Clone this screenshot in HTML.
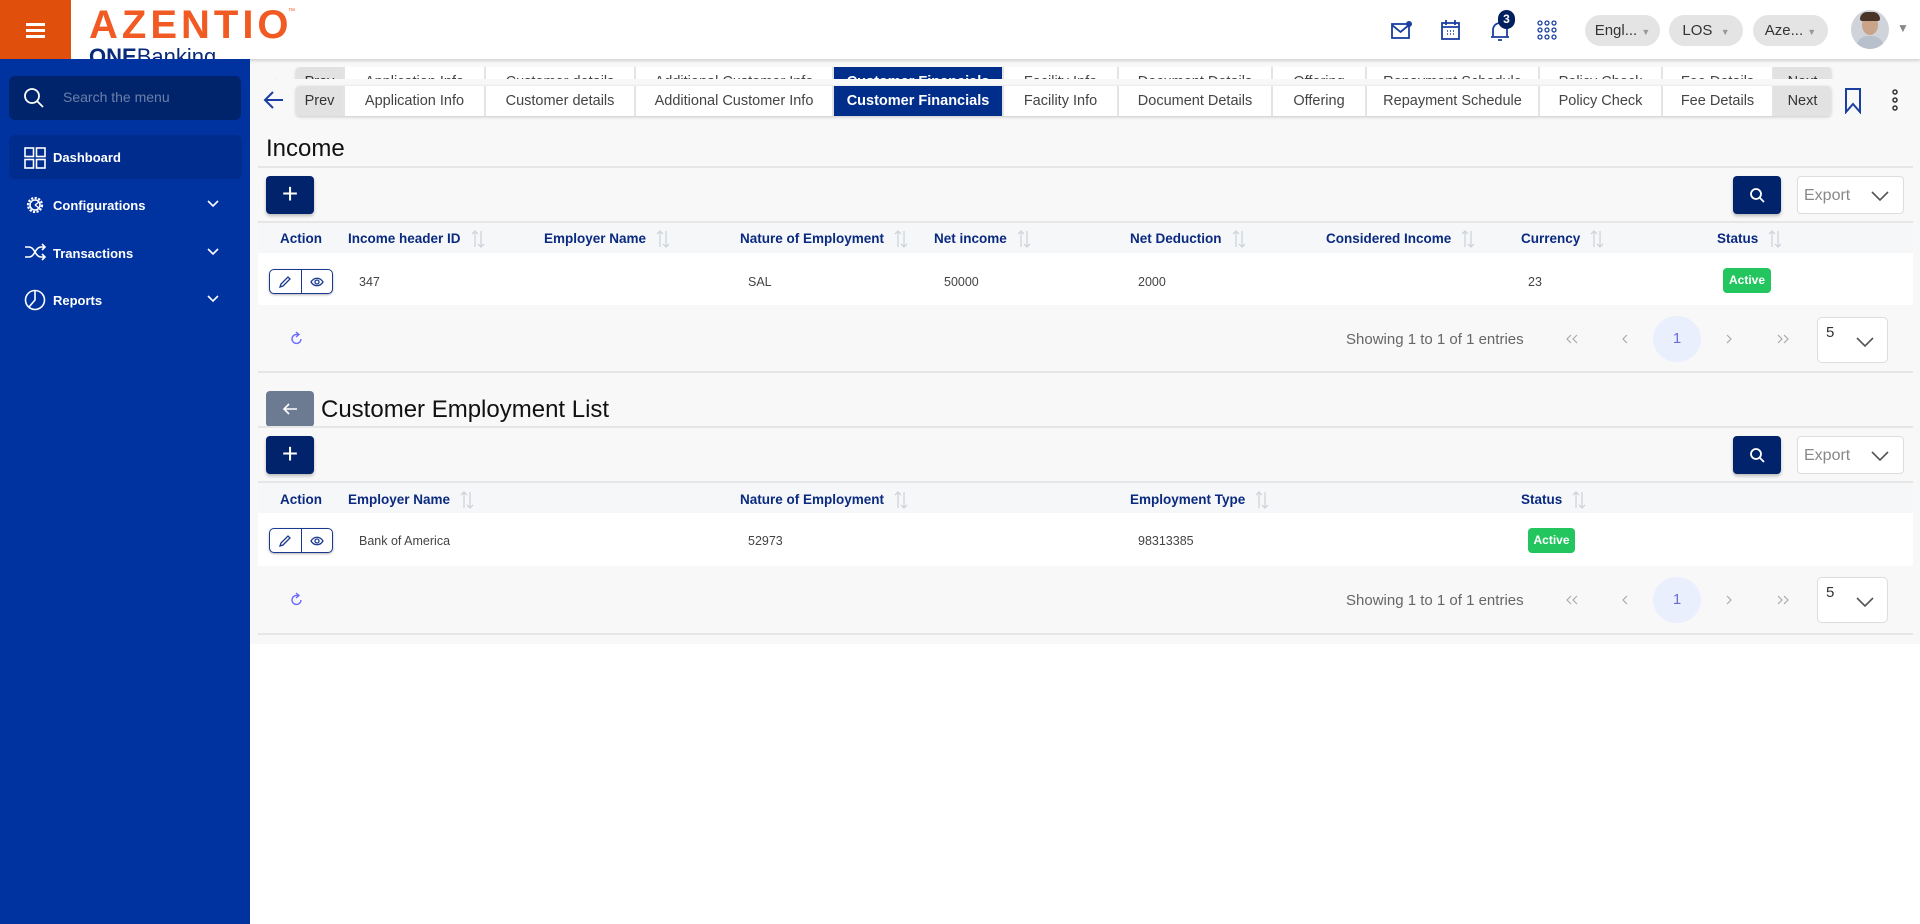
<!DOCTYPE html>
<html><head><meta charset="utf-8"><style>
*{box-sizing:border-box;margin:0;padding:0}
body{width:1920px;height:924px;overflow:hidden;background:#f8f8f8;font-family:"Liberation Sans",sans-serif;position:relative}
.a{position:absolute}
.hdr{left:0;top:0;width:1920px;height:59px;background:#fff;box-shadow:0 2px 3px rgba(0,0,0,.15);z-index:5;overflow:hidden}
.side{left:0;top:59px;width:250px;height:865px;background:#0033a0;z-index:6}
.tabs{height:30px;display:flex;border-radius:4px;overflow:hidden;box-shadow:0 1px 3px rgba(0,0,0,.2);background:#fff}
.tabs div{height:30px;line-height:30px;font-size:14.5px;color:#444;text-align:center;border-right:2px solid #e4e4e4;background:#fff;flex:none}
.tabs .g{background:#e2e2e2;color:#333}
.tabs .s{background:#002e8a;color:#fff;font-weight:bold}
.th{font-size:13.5px;font-weight:bold;color:#0a2a80;top:0;height:20px;display:flex;align-items:center}
.sort{margin-left:9px;margin-top:1px}
.td{font-size:12.5px;color:#444}
.btn{background:#00236b;border-radius:4px;color:#fff;text-align:center;box-shadow:0 2px 3px rgba(0,0,0,.25)}
.line{height:2px;background:#e6e6e6}
.act{width:64px;height:25px;border:1.5px solid #1a3a8f;border-radius:5px;display:flex;background:#fff;box-shadow:0 1px 2px rgba(0,0,0,.3)}
.act div{flex:1;display:flex;align-items:center;justify-content:center}
.act div:first-child{border-right:1.5px solid #1a3a8f}
.badge{background:#22c55e;color:#fff;font-weight:bold;font-size:12px;border-radius:4px;text-align:center;line-height:25px;height:25px}
.pg{font-size:15px;color:#666}
.pill{background:#e4e4e4;border-radius:16px;height:31px;line-height:31px;font-size:15px;color:#333;text-align:center;top:15px}
.mi{color:#fff;font-size:13px;font-weight:bold;left:53px}
.chev{left:207px}
</style></head><body>

<div class="a hdr">
  <div class="a" style="left:0;top:0;width:71px;height:59px;background:#e04f0c">
    <div class="a" style="left:26px;top:23px;width:19px;height:2.5px;background:#fff"></div>
    <div class="a" style="left:26px;top:29px;width:19px;height:2.5px;background:#fff"></div>
    <div class="a" style="left:26px;top:35px;width:19px;height:2.5px;background:#fff"></div>
  </div>
  <div class="a" style="left:89px;top:3px;font-size:40px;font-weight:bold;color:#f15a22;letter-spacing:4px">AZENTIO</div>
  <div class="a" style="left:288px;top:8px;font-size:7px;color:#f15a22">™</div>
  <div class="a" style="left:89px;top:44px;font-size:22px;color:#0a2a7a"><b>ONE</b>Banking</div>
  <svg class="a" style="left:1390px;top:20px" width="24" height="20" viewBox="0 0 24 20"><rect x="2" y="4" width="17" height="14" fill="none" stroke="#1a3fa0" stroke-width="1.8"/><path d="M2 5l8.5 7 8.5-7" fill="none" stroke="#1a3fa0" stroke-width="1.8"/><circle cx="19" cy="4" r="3" fill="#1a3fa0"/></svg>
  <svg class="a" style="left:1440px;top:19px" width="22" height="22" viewBox="0 0 22 22"><rect x="2" y="4" width="17" height="16" fill="none" stroke="#1a3fa0" stroke-width="1.8"/><path d="M2 8h17M6 1v5M15 1v5" stroke="#1a3fa0" stroke-width="1.8"/><path d="M7 12h1M10 12h1M13 12h1M7 15h1M10 15h1M13 15h1" stroke="#1a3fa0" stroke-width="1.6"/></svg>
  <svg class="a" style="left:1489px;top:18px" width="22" height="24" viewBox="0 0 22 24"><path d="M4 19V12a7 7 0 0 1 14 0v7zM2 19h18M9 22h4" fill="none" stroke="#1a3fa0" stroke-width="1.8"/></svg>
  <div class="a" style="left:1498px;top:10px;width:17px;height:19px;border-radius:9px;background:#002060;color:#fff;font-size:12px;font-weight:bold;text-align:center;line-height:19px">3</div>
  <svg class="a" style="left:1537px;top:20px" width="20" height="20" viewBox="0 0 20 20" fill="none" stroke="#1a3fa0" stroke-width="1.3"><circle cx="3" cy="3" r="2"/><circle cx="10" cy="3" r="2"/><circle cx="17" cy="3" r="2"/><circle cx="3" cy="10" r="2"/><circle cx="10" cy="10" r="2"/><circle cx="17" cy="10" r="2"/><circle cx="3" cy="17" r="2"/><circle cx="10" cy="17" r="2"/><circle cx="17" cy="17" r="2"/></svg>
  <div class="a pill" style="left:1585px;width:75px">Engl... <span style="font-size:9px;color:#999">▼</span></div>
  <div class="a pill" style="left:1669px;width:74px">LOS &nbsp;<span style="font-size:9px;color:#999">▼</span></div>
  <div class="a pill" style="left:1753px;width:75px">Aze... <span style="font-size:9px;color:#999">▼</span></div>
  <div class="a" style="left:1851px;top:10px;width:38px;height:39px;border-radius:50%;overflow:hidden;background:#d0d4da">
    <div class="a" style="left:11px;top:5px;width:16px;height:20px;border-radius:50%;background:#c9a488"></div>
    <div class="a" style="left:9px;top:2px;width:20px;height:9px;border-radius:10px 10px 3px 3px;background:#4a3428"></div>
    <div class="a" style="left:5px;top:26px;width:28px;height:16px;border-radius:12px 12px 0 0;background:#b8c0cc"></div>
  </div>
  <div class="a" style="left:1897px;top:21px;font-size:12px;color:#888">▼</div>
</div>

<div class="a side">
  <div class="a" style="left:9px;top:17px;width:232px;height:44px;background:#00246c;border-radius:6px">
    <svg class="a" style="left:14px;top:11px" width="22" height="22" viewBox="0 0 22 22" fill="none" stroke="#fff" stroke-width="1.8"><circle cx="9" cy="9" r="7"/><path d="M14 14l6 6"/></svg>
    <div class="a" style="left:54px;top:13px;font-size:14px;color:#6c7fa8">Search the menu</div>
  </div>
  <div class="a" style="left:9px;top:76px;width:233px;height:44px;background:#002c8e;border-radius:6px"></div>
  <svg class="a" style="left:24px;top:88px" width="22" height="22" viewBox="0 0 22 22" fill="none" stroke="#fff" stroke-width="1.6"><rect x="1" y="1" width="8.5" height="8.5"/><rect x="12.5" y="1" width="8.5" height="8.5"/><rect x="1" y="12.5" width="8.5" height="8.5"/><rect x="12.5" y="12.5" width="8.5" height="8.5"/></svg>
  <div class="a mi" style="top:91px">Dashboard</div>
  <svg class="a" style="left:25px;top:136px" width="20" height="20" viewBox="0 0 20 20" fill="none" stroke="#fff" stroke-width="2.2"><circle cx="10" cy="10" r="7" stroke-dasharray="2.2 1.4"/><circle cx="10" cy="10" r="5" stroke-width="1.6"/><path d="M10 10l4-3M10 10l4 3" stroke-width="1.4"/></svg>
  <div class="a mi" style="top:139px">Configurations</div>
  <svg class="a chev" style="top:141px" width="12" height="8" viewBox="0 0 12 8" fill="none" stroke="#fff" stroke-width="1.6"><path d="M1 1l5 5 5-5"/></svg>
  <svg class="a" style="left:24px;top:184px" width="22" height="18" viewBox="0 0 22 18" fill="none" stroke="#fff" stroke-width="1.6"><path d="M1 4h4c6 0 6 10 12 10h4M1 14h4c6 0 6-10 12-10h4M18 1l3 3-3 3M18 11l3 3-3 3"/></svg>
  <div class="a mi" style="top:187px">Transactions</div>
  <svg class="a chev" style="top:189px" width="12" height="8" viewBox="0 0 12 8" fill="none" stroke="#fff" stroke-width="1.6"><path d="M1 1l5 5 5-5"/></svg>
  <svg class="a" style="left:24px;top:230px" width="22" height="22" viewBox="0 0 22 22" fill="none" stroke="#fff" stroke-width="1.6"><circle cx="11" cy="11" r="9.5"/><path d="M11 1.5V11l-6 7"/></svg>
  <div class="a mi" style="top:234px">Reports</div>
  <svg class="a chev" style="top:236px" width="12" height="8" viewBox="0 0 12 8" fill="none" stroke="#fff" stroke-width="1.6"><path d="M1 1l5 5 5-5"/></svg>
</div>

<div class="a" style="left:262px;top:67px;width:1658px;height:12px;overflow:hidden">
  <div class="a" style="left:6px;top:-2px;color:#1a3fa0;font-size:22px">←</div>
  <div class="a tabs" style="left:34px;top:0">
    <div class="g" style="width:49px">Prev</div><div style="width:141px">Application Info</div><div style="width:150px">Customer details</div><div style="width:198px">Additional Customer Info</div><div class="s" style="width:170px">Customer Financials</div><div style="width:115px">Facility Info</div><div style="width:154px">Document Details</div><div style="width:94px">Offering</div><div style="width:173px">Repayment Schedule</div><div style="width:123px">Policy Check</div><div style="width:111px">Fee Details</div><div class="g" style="width:57px;border:none">Next</div>
  </div>
</div>
<div class="a" style="left:262px;top:79px;width:1658px;height:5px;background:#f8f8f8"></div>

<svg class="a" style="left:263px;top:89px" width="22" height="22" viewBox="0 0 22 22" fill="none" stroke="#1a3fa0" stroke-width="2"><path d="M20 11H3M10 3l-8 8 8 8"/></svg>
<div class="a tabs" style="left:296px;top:86px">
  <div class="g" style="width:49px">Prev</div><div style="width:141px">Application Info</div><div style="width:150px">Customer details</div><div style="width:198px">Additional Customer Info</div><div class="s" style="width:170px">Customer Financials</div><div style="width:115px">Facility Info</div><div style="width:154px">Document Details</div><div style="width:94px">Offering</div><div style="width:173px">Repayment Schedule</div><div style="width:123px">Policy Check</div><div style="width:111px">Fee Details</div><div class="g" style="width:57px;border:none">Next</div>
</div>
<svg class="a" style="left:1844px;top:88px" width="18" height="26" viewBox="0 0 18 26" fill="none" stroke="#1a3fa0" stroke-width="2"><path d="M2 1h14v23l-7-8-7 8z"/></svg>
<svg class="a" style="left:1890px;top:88px" width="10" height="26" viewBox="0 0 10 26" fill="none" stroke="#333" stroke-width="1.5"><circle cx="5" cy="4" r="2"/><circle cx="5" cy="12" r="2"/><circle cx="5" cy="20" r="2"/></svg>

<svg width="0" height="0" style="position:absolute"><defs><symbol id="so" viewBox="0 0 16 20"><path d="M5 18V2M2 5l3-3 3 3M11 2v16M8 15l3 3 3-3" fill="none" stroke="#cfd3da" stroke-width="1.3"/></symbol><symbol id="dn" viewBox="0 0 18 10"><path d="M1 1l8 8 8-8" fill="none" stroke="#555" stroke-width="1.6"/></symbol></defs></svg>

<div class="a" style="left:266px;top:135px;font-size:24px;color:#111">Income</div>
<div class="a line" style="left:258px;top:166px;width:1655px"></div>
<div class="a btn" style="left:266px;top:176px;width:48px;height:38px;font-size:28px;line-height:36px;font-weight:300">+</div>
<div class="a btn" style="left:1733px;top:176px;width:48px;height:38px"><svg style="margin-top:11px" width="16" height="16" viewBox="0 0 16 16" fill="none" stroke="#fff" stroke-width="1.8"><circle cx="7" cy="7" r="5"/><path d="M11 11l4 4"/></svg></div>
<div class="a" style="left:1797px;top:176px;width:107px;height:38px;border:1.5px solid #ddd;border-radius:4px;background:#fff;font-size:16px;color:#888;padding:10px 0 0 6px">Export<svg class="a" style="left:73px;top:14px" width="18" height="10"><use href="#dn"/></svg></div>
<div class="a line" style="left:258px;top:221px;width:1655px"></div>
<div class="a" style="left:258px;top:223px;width:1655px;height:30px;background:#f6f7f9"></div>
<div class="a" style="left:0;top:228px;width:1920px;height:20px">
  <div class="a th" style="left:280px">Action</div>
  <div class="a th" style="left:348px">Income header ID<svg class="sort" width="16" height="20"><use href="#so"/></svg></div>
  <div class="a th" style="left:544px">Employer Name<svg class="sort" width="16" height="20"><use href="#so"/></svg></div>
  <div class="a th" style="left:740px">Nature of Employment<svg class="sort" width="16" height="20"><use href="#so"/></svg></div>
  <div class="a th" style="left:934px">Net income<svg class="sort" width="16" height="20"><use href="#so"/></svg></div>
  <div class="a th" style="left:1130px">Net Deduction<svg class="sort" width="16" height="20"><use href="#so"/></svg></div>
  <div class="a th" style="left:1326px">Considered Income<svg class="sort" width="16" height="20"><use href="#so"/></svg></div>
  <div class="a th" style="left:1521px">Currency<svg class="sort" width="16" height="20"><use href="#so"/></svg></div>
  <div class="a th" style="left:1717px">Status<svg class="sort" width="16" height="20"><use href="#so"/></svg></div>
</div>
<div class="a" style="left:258px;top:253px;width:1655px;height:52px;background:#fff"></div>
<div class="a act" style="left:269px;top:269px"><div><svg width="14" height="14" viewBox="0 0 14 14" fill="none" stroke="#1a3a8f" stroke-width="1.3"><path d="M2 12l1-3 7-7 2 2-7 7z"/></svg></div><div><svg width="14" height="14" viewBox="0 0 14 14" fill="none" stroke="#1a3a8f" stroke-width="1.3"><path d="M1 7c3-5 9-5 12 0-3 5-9 5-12 0z"/><circle cx="7" cy="7" r="2"/></svg></div></div>
<div class="a td" style="left:359px;top:275px">347</div>
<div class="a td" style="left:748px;top:275px">SAL</div>
<div class="a td" style="left:944px;top:275px">50000</div>
<div class="a td" style="left:1138px;top:275px">2000</div>
<div class="a td" style="left:1528px;top:275px">23</div>
<div class="a badge" style="left:1723px;top:268px;width:48px">Active</div>

<svg class="a" style="left:290px;top:331px" width="14" height="16" viewBox="0 0 14 16" fill="none" stroke="#6b6bff" stroke-width="1.4"><path d="M11 8a4.5 4.5 0 1 1-3-4.3M6 1l3 2.5L6 6"/></svg>
<div class="a pg" style="left:1346px;top:331px">Showing 1 to 1 of 1 entries</div>
<svg class="a" style="left:1565px;top:334px" width="14" height="10" viewBox="0 0 14 10" fill="none" stroke="#aaa" stroke-width="1.2"><path d="M6 1L2 5l4 4M12 1L8 5l4 4"/></svg>
<svg class="a" style="left:1621px;top:334px" width="8" height="10" viewBox="0 0 8 10" fill="none" stroke="#aaa" stroke-width="1.2"><path d="M6 1L2 5l4 4"/></svg>
<div class="a" style="left:1653px;top:316px;width:48px;height:46px;border-radius:50%;background:#e9effd;color:#6b6bd8;font-size:15px;text-align:center;line-height:46px">1</div>
<svg class="a" style="left:1725px;top:334px" width="8" height="10" viewBox="0 0 8 10" fill="none" stroke="#aaa" stroke-width="1.2"><path d="M2 1l4 4-4 4"/></svg>
<svg class="a" style="left:1776px;top:334px" width="14" height="10" viewBox="0 0 14 10" fill="none" stroke="#aaa" stroke-width="1.2"><path d="M2 1l4 4-4 4M8 1l4 4-4 4"/></svg>
<div class="a" style="left:1817px;top:317px;width:71px;height:46px;border:1.5px solid #ddd;border-radius:5px;background:#fff;font-size:15px;color:#333;padding:6px 0 0 8px">5<svg class="a" style="left:38px;top:19px" width="18" height="10"><use href="#dn"/></svg></div>
<div class="a line" style="left:258px;top:371px;width:1655px"></div>

<div class="a" style="left:266px;top:391px;width:48px;height:36px;background:#6c7a92;border-radius:4px"><svg class="a" style="left:16px;top:11px" width="16" height="14" viewBox="0 0 16 14" fill="none" stroke="#fff" stroke-width="1.6"><path d="M15 7H2M7 2L2 7l5 5"/></svg></div>
<div class="a" style="left:321px;top:396px;font-size:24px;color:#111">Customer Employment List</div>
<div class="a line" style="left:258px;top:426px;width:1655px"></div>
<div class="a btn" style="left:266px;top:436px;width:48px;height:38px;font-size:28px;line-height:36px;font-weight:300">+</div>
<div class="a btn" style="left:1733px;top:436px;width:48px;height:38px"><svg style="margin-top:11px" width="16" height="16" viewBox="0 0 16 16" fill="none" stroke="#fff" stroke-width="1.8"><circle cx="7" cy="7" r="5"/><path d="M11 11l4 4"/></svg></div>
<div class="a" style="left:1797px;top:436px;width:107px;height:38px;border:1.5px solid #ddd;border-radius:4px;background:#fff;font-size:16px;color:#888;padding:10px 0 0 6px">Export<svg class="a" style="left:73px;top:14px" width="18" height="10"><use href="#dn"/></svg></div>
<div class="a line" style="left:258px;top:481px;width:1655px"></div>
<div class="a" style="left:258px;top:483px;width:1655px;height:30px;background:#f6f7f9"></div>
<div class="a" style="left:0;top:489px;width:1920px;height:20px">
  <div class="a th" style="left:280px">Action</div>
  <div class="a th" style="left:348px">Employer Name<svg class="sort" width="16" height="20"><use href="#so"/></svg></div>
  <div class="a th" style="left:740px">Nature of Employment<svg class="sort" width="16" height="20"><use href="#so"/></svg></div>
  <div class="a th" style="left:1130px">Employment Type<svg class="sort" width="16" height="20"><use href="#so"/></svg></div>
  <div class="a th" style="left:1521px">Status<svg class="sort" width="16" height="20"><use href="#so"/></svg></div>
</div>
<div class="a" style="left:258px;top:513px;width:1655px;height:53px;background:#fff"></div>
<div class="a act" style="left:269px;top:528px"><div><svg width="14" height="14" viewBox="0 0 14 14" fill="none" stroke="#1a3a8f" stroke-width="1.3"><path d="M2 12l1-3 7-7 2 2-7 7z"/></svg></div><div><svg width="14" height="14" viewBox="0 0 14 14" fill="none" stroke="#1a3a8f" stroke-width="1.3"><path d="M1 7c3-5 9-5 12 0-3 5-9 5-12 0z"/><circle cx="7" cy="7" r="2"/></svg></div></div>
<div class="a td" style="left:359px;top:534px">Bank of America</div>
<div class="a td" style="left:748px;top:534px">52973</div>
<div class="a td" style="left:1138px;top:534px">98313385</div>
<div class="a badge" style="left:1528px;top:528px;width:47px">Active</div>

<svg class="a" style="left:290px;top:592px" width="14" height="16" viewBox="0 0 14 16" fill="none" stroke="#6b6bff" stroke-width="1.4"><path d="M11 8a4.5 4.5 0 1 1-3-4.3M6 1l3 2.5L6 6"/></svg>
<div class="a pg" style="left:1346px;top:592px">Showing 1 to 1 of 1 entries</div>
<svg class="a" style="left:1565px;top:595px" width="14" height="10" viewBox="0 0 14 10" fill="none" stroke="#aaa" stroke-width="1.2"><path d="M6 1L2 5l4 4M12 1L8 5l4 4"/></svg>
<svg class="a" style="left:1621px;top:595px" width="8" height="10" viewBox="0 0 8 10" fill="none" stroke="#aaa" stroke-width="1.2"><path d="M6 1L2 5l4 4"/></svg>
<div class="a" style="left:1653px;top:577px;width:48px;height:46px;border-radius:50%;background:#e9effd;color:#6b6bd8;font-size:15px;text-align:center;line-height:46px">1</div>
<svg class="a" style="left:1725px;top:595px" width="8" height="10" viewBox="0 0 8 10" fill="none" stroke="#aaa" stroke-width="1.2"><path d="M2 1l4 4-4 4"/></svg>
<svg class="a" style="left:1776px;top:595px" width="14" height="10" viewBox="0 0 14 10" fill="none" stroke="#aaa" stroke-width="1.2"><path d="M2 1l4 4-4 4M8 1l4 4-4 4"/></svg>
<div class="a" style="left:1817px;top:577px;width:71px;height:46px;border:1.5px solid #ddd;border-radius:5px;background:#fff;font-size:15px;color:#333;padding:6px 0 0 8px">5<svg class="a" style="left:38px;top:19px" width="18" height="10"><use href="#dn"/></svg></div>
<div class="a line" style="left:258px;top:633px;width:1655px"></div>
<div class="a" style="left:250px;top:644px;width:1670px;height:280px;background:#fff"></div>
</body></html>
